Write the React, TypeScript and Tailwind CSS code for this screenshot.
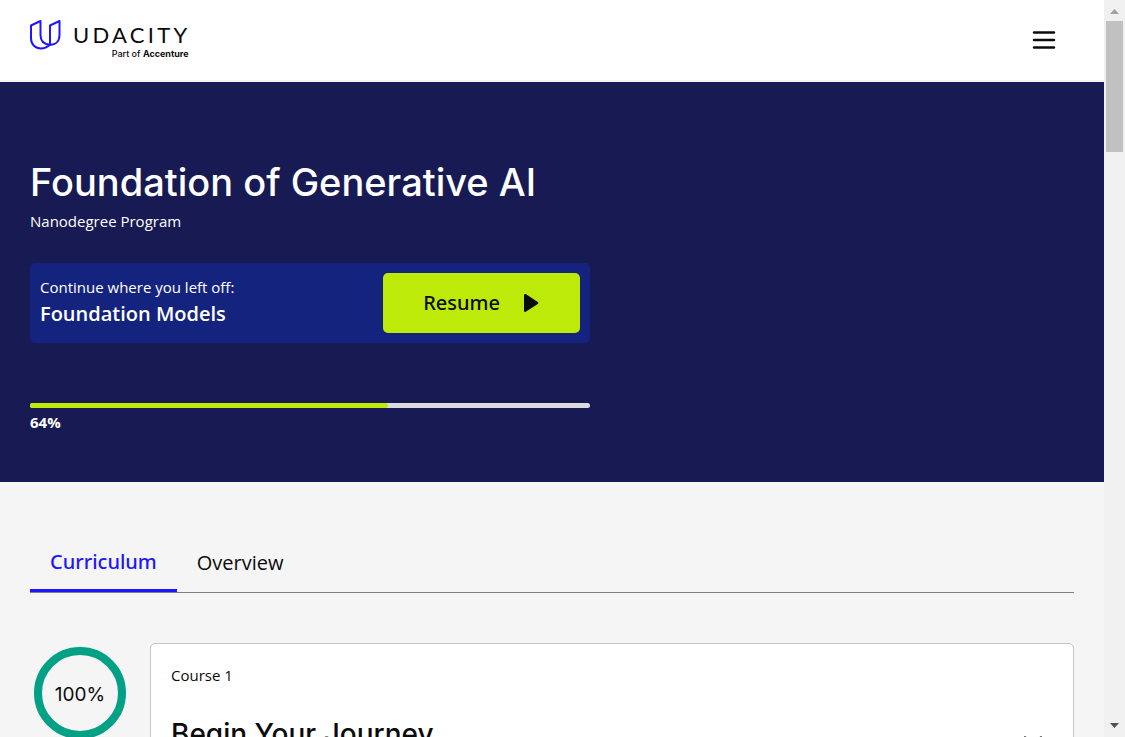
const course = { label: "Course 1", title: "Begin Your Journey", progress: 100 };
const programProgress = 64;

function UdacityLogo() {
  return (
    <a href="#home" aria-label="Udacity, part of Accenture" className="flex items-start gap-3 text-[#0b0b0b]">
      <svg width="32" height="32" viewBox="0 0 32 32" fill="none" stroke="#2015ff" strokeWidth="2" strokeLinejoin="round" aria-hidden="true">
        <path d="M11.500 1 2 5.500V18C2 24.800 6.500 28.500 12 28.500C15.500 28.500 18.200 27.200 21 24.800C14.800 24.200 11.500 20.500 11.500 15Z" />
        <path d="M21 24.800V5.500L30.500 1V15C30.500 21 27 24.800 21 24.800Z" />
      </svg>
      <span className="flex flex-col items-end">
        <span className="font-[Lato,sans-serif] text-[22px] leading-[29px] tracking-[0.15em]">UDACITY</span>
        <span className="pr-[2px] font-[Inter,sans-serif] text-[9px] leading-[10px] font-medium">
          Part of <b>Accenture</b>
        </span>
      </span>
    </a>
  );
}

function Header() {
  return (
    <header className="flex h-[82px] shrink-0 items-start justify-between border-b-2 border-[#f5f5f5] bg-white pt-5 pr-12 pl-[29px]">
      <UdacityLogo />
      <button type="button" aria-label="Open menu" className="flex h-10 w-6 items-center justify-center">
        <svg width="24" height="20" viewBox="0 0 24 20" stroke="#0b0b0b" strokeWidth="2.5" strokeLinecap="round" aria-hidden="true">
          <path d="M2 2.4h20M2 10h20M2 17.6h20" />
        </svg>
      </button>
    </header>
  );
}

function Hero() {
  return (
    <section className="h-[400px] shrink-0 bg-[#171a53] px-[30px] pt-[78px] text-white">
      <h1 className="font-[Inter,sans-serif] text-[38px] leading-[44px] font-medium">Foundation of Generative AI</h1>
      <p className="mt-[5px] text-[15px] leading-6">Nanodegree Program</p>
      <div className="mt-[30px] flex max-w-[560px] items-center justify-between rounded-[5px] bg-[#14247e] p-[10px]">
        <div className="self-start pt-[2px]">
          <p className="text-[15px] leading-6">Continue where you left off:</p>
          <p className="text-xl leading-[30px] font-semibold">Foundation Models</p>
        </div>
        <button type="button" className="flex h-[60px] items-center gap-6 rounded-[5px] bg-[#bdea09] px-10 font-['Noto_Sans',sans-serif] text-xl font-medium text-[#0b0b0b]">
          Resume
          <svg width="16" height="20" viewBox="0 0 16 20" fill="#0b0b0b" aria-hidden="true">
            <path d="M0 2.2C0 1 1.2.6 2.1 1.2L13.8 9.1c.7.5.7 1.3 0 1.8L2.1 18.6C1.2 19.3 0 18.8 0 17.7Z" />
          </svg>
        </button>
      </div>
      <div className="mt-[60px] h-[5px] max-w-[560px] overflow-hidden rounded-full bg-[#dbdbdf]" role="progressbar" aria-label="Program progress" aria-valuenow={programProgress}>
        <div className="h-full rounded-r-full bg-[#bdea09]" style={{ width: `${programProgress}%` }} />
      </div>
      <p className="mt-[2px] text-[15px] leading-6 font-bold">{programProgress}%</p>
    </section>
  );
}

function Tabs() {
  return (
    <nav aria-label="Program sections" className="flex items-end border-b border-[#808080] text-xl text-[#0b0b0b]">
      <a href="#curriculum" aria-current="page" className="border-b-3 border-[#2015ff] px-5 pb-[13px] font-['Noto_Sans',sans-serif] font-medium text-[#2015ff]">
        Curriculum
      </a>
      <a href="#overview" className="px-5 pb-[15px]">
        Overview
      </a>
    </nav>
  );
}

function CourseRow() {
  return (
    <article className="mt-[50px] flex items-start gap-6 text-[#0b0b0b]">
      <div className="mt-1 ml-1 flex size-[92px] shrink-0 items-center justify-center rounded-full border-8 border-[#02a186] pt-1 font-[Inter,sans-serif] text-[19px]">
        {course.progress}%
      </div>
      <div className="grow rounded-[5px] border border-[#c5c5c5] bg-white px-5 pt-[19px] pb-8">
        <p className="text-[15px] leading-6">{course.label}</p>
        <div className="mt-[31px] flex items-start justify-between pr-[10px]">
          <h2 className="font-[Inter,sans-serif] text-[28px] leading-8 font-medium">{course.title}</h2>
          <button type="button" aria-label="Expand course" className="mt-4">
            <svg width="20" height="12" viewBox="0 0 20 12" fill="none" stroke="#555" strokeWidth="2" strokeLinecap="round" aria-hidden="true">
              <path d="m2 3 8 7 8-7" />
            </svg>
          </button>
        </div>
      </div>
    </article>
  );
}

function Scrollbar() {
  return (
    <div aria-hidden="true" className="flex w-[21px] shrink-0 flex-col items-center justify-between bg-[#f0f0f0] pt-[9px] pb-[9px]">
      <div className="flex w-full flex-col items-center gap-[7px]">
        <svg width="9" height="5" viewBox="0 0 9 5" fill="#a0a0a0">
          <path d="M0 5 4.5 0 9 5Z" />
        </svg>
        <div className="h-[131px] w-[17px] bg-[#c1c1c1]" />
      </div>
      <svg width="9" height="5" viewBox="0 0 9 5" fill="#505050">
        <path d="M0 0h9L4.500 5Z" />
      </svg>
    </div>
  );
}

export default function App() {
  return (
    <div className="flex h-screen overflow-hidden bg-[#f5f5f5] font-['Open_Sans',sans-serif]">
      <div className="flex min-w-0 grow flex-col overflow-hidden">
        <Header />
        <main className="flex flex-col">
          <Hero />
          <section className="shrink-0 px-[30px] pt-[66px]">
            <Tabs />
            <CourseRow />
          </section>
        </main>
      </div>
      <Scrollbar />
    </div>
  );
}
